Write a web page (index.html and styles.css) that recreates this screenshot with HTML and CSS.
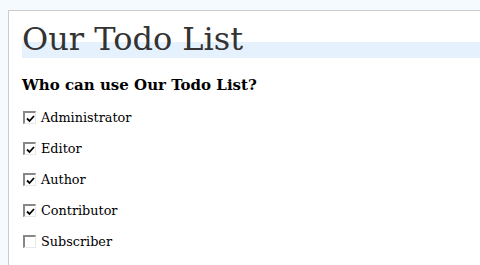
FILE: index.html
```html
<!DOCTYPE html>
<html lang="en">
<head>
    <meta charset="UTF-8">
    <title>Our Todo List</title>
    <link rel="stylesheet" href="styles.css">
</head>
<body>
    <div class="panel">
        <h1 class="title">Our Todo List</h1>
        <h3 class="subtitle">Who can use Our Todo List?</h3>
        <ul class="roles">
            <li class="role"><span class="box checked"></span>Administrator</li>
            <li class="role"><span class="box checked"></span>Editor</li>
            <li class="role"><span class="box checked"></span>Author</li>
            <li class="role"><span class="box checked"></span>Contributor</li>
            <li class="role"><span class="box"></span>Subscriber</li>
        </ul>
    </div>
</body>
</html>
```

FILE: styles.css
```css
* {
    margin: 0;
    padding: 0;
    box-sizing: border-box;
}

html, body {
    height: 100%;
    overflow: hidden;
}

body {
    background: #f5faff;
    padding: 10px 0 0 8px;
    font-family: "DejaVu Serif", serif;
    color: #000;
}

.panel {
    background: #fff;
    border-top: 1px solid #ccc;
    border-left: 1px solid #ccc;
    padding: 10px 0 0 13px;
    height: 100%;
}

.title {
    font-size: 32px;
    font-weight: normal;
    color: #333;
    line-height: 37px;
    background: linear-gradient(to bottom, transparent 21px, #e5f2fd 21px);
}

.subtitle {
    font-size: 15px;
    font-weight: bold;
    margin-top: 18px;
    line-height: 18px;
}

.roles {
    list-style: none;
    margin-top: 8px;
}

.role {
    display: flex;
    align-items: center;
    font-size: 12.8px;
    height: 31px;
    margin-left: 1px;
}

.box {
    width: 13px;
    height: 13px;
    margin-right: 5px;
    border-top: 2px solid #888;
    border-left: 2px solid #888;
    border-right: 1px solid #e8e8e8;
    border-bottom: 1px solid #e8e8e8;
    background: #fff no-repeat center;
}

.box.checked {
    background-image: url("data:image/svg+xml,%3Csvg xmlns='http://www.w3.org/2000/svg' width='9' height='9' viewBox='0 0 9 9'%3E%3Cpath d='M1 4.5 L3.5 7 L8 2' fill='none' stroke='%23000' stroke-width='1.8'/%3E%3C/svg%3E");
}
```
